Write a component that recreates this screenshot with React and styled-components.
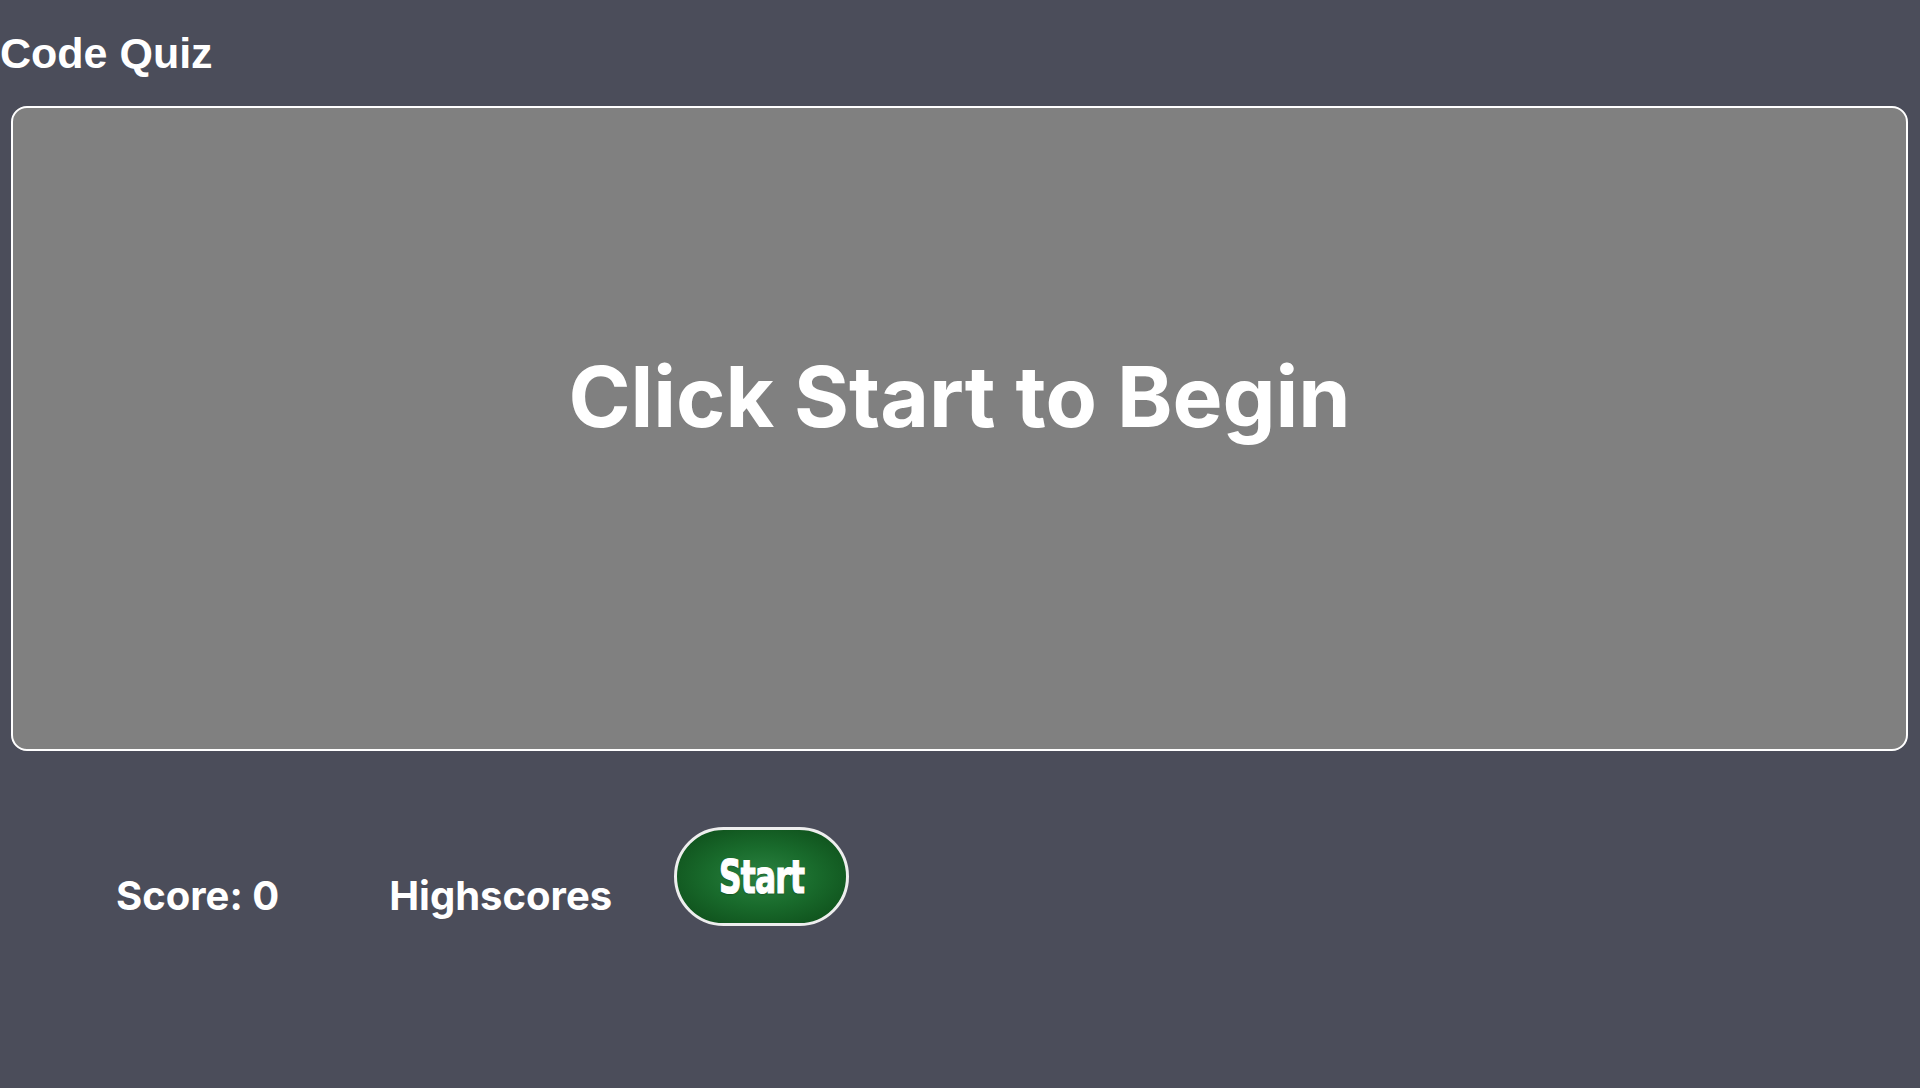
import styled, { createGlobalStyle } from 'styled-components'

const Global = createGlobalStyle`
  html, body {
    margin: 0;
    padding: 0;
    background-color: #4b4d5a;
  }
  body {
    min-height: 1088px;
    font-family: "Liberation Sans", Arial, sans-serif;
    color: #ffffff;
  }
`;

const Page = styled.div`
  display: flex;
  flex-direction: column;
`;

const Title = styled.h1`
  margin: 0;
  padding-top: 29px;
  font-family: "Liberation Sans", Arial, sans-serif;
  font-size: 43px;
  line-height: 48px;
  font-weight: 700;
  color: #ffffff;
`;

const QuizBox = styled.div`
  box-sizing: border-box;
  margin: 29px 12px 0 11px;
  height: 645px;
  border: 2px solid #ffffff;
  border-radius: 16px;
  background-color: #808080;
  display: flex;
  justify-content: center;
  align-items: flex-start;
  padding-top: 247px;
`;

const Prompt = styled.h2`
  margin: 0;
  font-family: Inter, "Noto Sans", sans-serif;
  font-size: 84px;
  line-height: 84px;
  font-weight: 700;
  color: #ffffff;
`;

const Controls = styled.div`
  display: flex;
  align-items: flex-end;
  margin-top: 76px;
  padding-left: 116px;
`;

const Stat = styled.p`
  margin: 0 ${props => props.gap}px 0 0;
  font-family: Inter, "Noto Sans", sans-serif;
  font-size: 40px;
  line-height: 40px;
  font-weight: 700;
  color: #ffffff;
  padding-bottom: 10px;
`;

const StartButton = styled.button`
  box-sizing: border-box;
  width: 175px;
  height: 99px;
  border: 3px solid #eeeeee;
  border-radius: 50px;
  background: radial-gradient(ellipse at center, #2b8241 0%, #196b2c 45%, #0c4917 100%);
  color: #ffffff;
  cursor: pointer;
  padding: 0;
  display: flex;
  align-items: center;
  justify-content: center;
`;

const StartLabel = styled.span`
  display: inline-block;
  font-family: "DejaVu Sans Condensed", "DejaVu Sans", sans-serif;
  font-size: 47px;
  font-weight: 700;
  letter-spacing: -1px;
  line-height: 1;
  transform: scaleX(0.74);
  -webkit-text-stroke: 1.2px #ffffff;
  text-shadow: 0 1px 2px rgba(0, 0, 0, 0.45);
`;

export default function App() {
  return (
    <Page>
      <Global />
      <Title>Code Quiz</Title>
      <QuizBox>
        <Prompt>Click Start to Begin</Prompt>
      </QuizBox>
      <Controls>
        <Stat gap={110}>Score: 0</Stat>
        <Stat gap={62}>Highscores</Stat>
        <StartButton>
          <StartLabel>Start</StartLabel>
        </StartButton>
      </Controls>
    </Page>
  )
}
